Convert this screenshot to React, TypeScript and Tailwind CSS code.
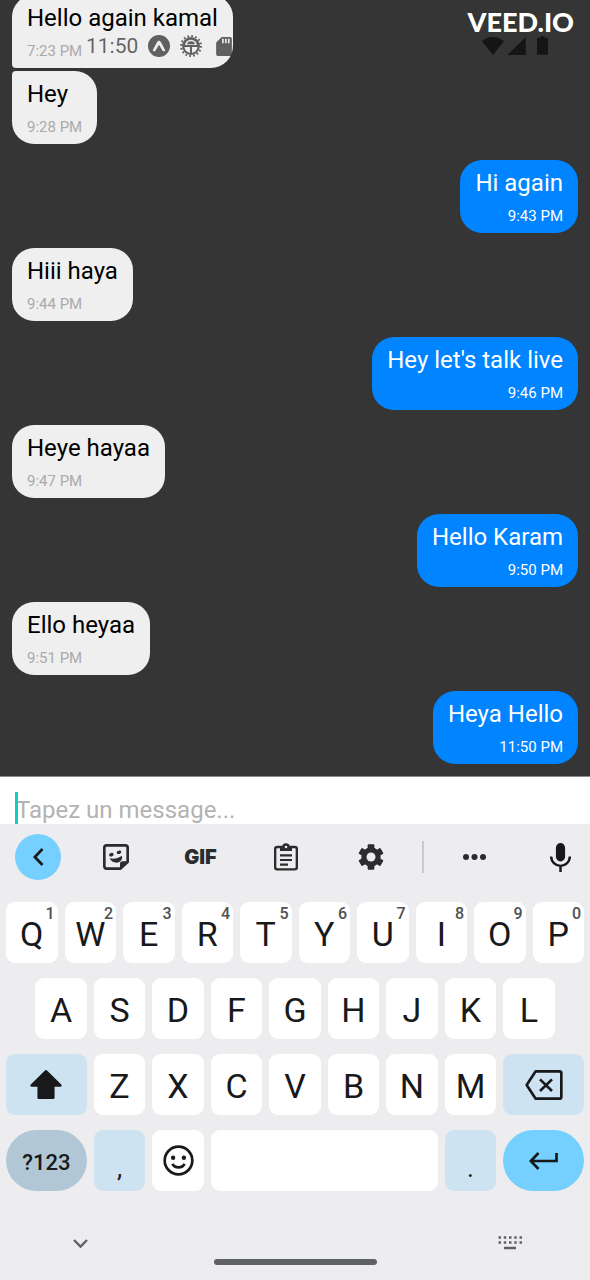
import type { ReactNode } from "react";

type Message = { text: string; time: string; sent?: boolean; joined?: "up" | "down" };

const messages: Message[] = [
  { text: "Hello again kamal", time: "7:23 PM", joined: "down" },
  { text: "Hey", time: "9:28 PM", joined: "up" },
  { text: "Hi again", time: "9:43 PM", sent: true },
  { text: "Hiii haya", time: "9:44 PM" },
  { text: "Hey let's talk live", time: "9:46 PM", sent: true },
  { text: "Heye hayaa", time: "9:47 PM" },
  { text: "Hello Karam", time: "9:50 PM", sent: true },
  { text: "Ello heyaa", time: "9:51 PM" },
  { text: "Heya Hello", time: "11:50 PM", sent: true },
];

function Bubble({ text, time, sent, joined }: Message) {
  const side = sent
    ? "mt-4 self-end bg-[#0084ff] text-white"
    : `self-start bg-[#efefef] text-black ${joined === "up" ? "mt-[3px] rounded-tl-[4px]" : "mt-[15px]"} ${
        joined === "down" ? "rounded-bl-[4px]" : ""
      }`;
  return (
    <li className={`flex shrink-0 flex-col gap-[9px] rounded-[22px] px-[15px] py-2 ${side}`}>
      <p className="text-[24px] leading-[30px]">{text}</p>
      <time
        className={`text-[15px] leading-[18px] ${sent ? "text-right text-white" : "text-left text-[#aaaaaa]"}`}
      >
        {time}
      </time>
    </li>
  );
}

function StatusBar() {
  return (
    <div className="absolute inset-x-0 top-0 flex h-[68px] items-start justify-between pr-4 pl-[86px]">
      <div className="flex items-center gap-[10px] pt-[33px] text-black/60">
        <span className="text-[21px] leading-[26px]">11:50</span>
        <svg viewBox="0 0 66 66" className="size-[22px]" fill="currentColor" aria-hidden="true">
          <path
            fillRule="evenodd"
            d="M33 0a33 33 0 1 0 0 66a33 33 0 1 0 0-66zM33 17c-3 0-4 2-6 5L15 44c-1 3 1 5 3 5 3 0 4-2 6-5l9-15 9 15c2 3 3 5 6 5 2 0 4-2 3-5L39 22c-2-3-3-5-6-5z"
          />
        </svg>
        <svg viewBox="0 0 64 64" className="size-[22px]" fill="currentColor" aria-hidden="true">
          <path
            fillRule="evenodd"
            d="M32 6a26 26 0 1 0 0 52a26 26 0 1 0 0-52zM15 29a17 15 0 0 1 34 0zM13 35h16v17a20 20 0 0 1-16-17zM35 35h16a20 20 0 0 1-16 17z"
          />
          <path d="M21 27a11 9 0 0 1 22 0z" />
          <circle cx="32" cy="32" r="29" fill="none" stroke="currentColor" strokeWidth="6" strokeDasharray="5 6.386" />
        </svg>
        <svg viewBox="0 0 48 58" className="ml-1 h-[19px] w-[16px]" fill="currentColor" aria-hidden="true">
          <path
            fillRule="evenodd"
            d="M17 0h26a5 5 0 0 1 5 5v48a5 5 0 0 1-5 5H5a5 5 0 0 1-5-5V17zM18 5v14h5V5zM27 5v14h5V5zM36 5v14h5V5z"
          />
        </svg>
      </div>
      <div className="flex flex-col items-end pt-2">
        <span className="font-['Lato',sans-serif] text-[27px] leading-[28px] font-black text-white">VEED.IO</span>
        <div className="flex items-center gap-[3px] pr-[26px] text-black/60">
          <svg viewBox="0 0 66 54" className="h-[18px] w-[22px]" fill="currentColor" aria-hidden="true">
            <path d="M33 54L0 13C18-4 48-4 66 13z" />
          </svg>
          <svg viewBox="0 0 56 54" className="h-[18px] w-[19px]" fill="currentColor" aria-hidden="true">
            <path d="M56 0v54H0z" />
          </svg>
          <svg viewBox="0 0 33 56" className="ml-2 h-[19px] w-[11px]" fill="currentColor" aria-hidden="true">
            <path d="M10 0h13v5h7a3 3 0 0 1 3 3v45a3 3 0 0 1-3 3H3a3 3 0 0 1-3-3V8a3 3 0 0 1 3-3h7z" />
          </svg>
        </div>
      </div>
    </div>
  );
}

function Toolbar() {
  const tool = "flex size-[46px] items-center justify-center rounded-full";
  return (
    <div className="grid h-[66px] grid-cols-[73fr_85fr_85fr_85fr_85fr_19fr_85fr_73fr] items-center justify-items-center text-[#2b2c2d]">
      <button type="button" aria-label="Back" className={`${tool} ml-[15px] justify-self-start bg-[#75cfff] text-[#17191a]`}>
        <svg viewBox="0 0 32 54" className="h-[18px] w-[11px]" fill="none" stroke="currentColor" strokeWidth="8" aria-hidden="true">
          <path d="M28 3L5 27l23 24" />
        </svg>
      </button>
      <button type="button" aria-label="Stickers" className={tool}>
        <svg viewBox="0 0 78 78" className="size-[26px]" aria-hidden="true">
          <path
            d="M52 74H11a7 7 0 0 1-7-7V11a7 7 0 0 1 7-7h56a7 7 0 0 1 7 7v43z"
            fill="none"
            stroke="currentColor"
            strokeWidth="8"
          />
          <path d="M51 77V60a8 8 0 0 1 8-8h18z" fill="currentColor" />
          <ellipse cx="25" cy="32" rx="7" ry="5.500" transform="rotate(-15 25 32)" fill="currentColor" />
          <ellipse cx="48" cy="25" rx="7" ry="5" transform="rotate(-15 48 25)" fill="currentColor" />
          <path d="M20 43c13 3 25 0 37-8 2 12-6 21-17 21-9 0-16-5-20-13z" fill="currentColor" />
        </svg>
      </button>
      <button type="button" className={`${tool} font-['Inter',sans-serif] text-[20px] font-black`}>
        GIF
      </button>
      <button type="button" aria-label="Clipboard" className={tool}>
        <svg viewBox="0 0 72 84" className="h-[28px] w-[24px]" fill="none" stroke="currentColor" strokeWidth="7" aria-hidden="true">
          <rect x="3.500" y="12" width="65" height="67" rx="6" />
          <path d="M18 12h10a8 8 0 0 1 16 0h10v12H18z" fill="currentColor" stroke="none" />
          <path d="M28 12a8 8 0 0 1 16 0" fill="currentColor" />
          <circle cx="36" cy="12" r="4" fill="#ededef" stroke="none" />
          <path d="M18 37h36M18 51h36M18 65h24" strokeWidth="6.5" />
        </svg>
      </button>
      <button type="button" aria-label="Settings" className={tool}>
        <svg viewBox="0 0 78 78" className="size-[26px]" aria-hidden="true">
          <g fill="currentColor">
            <circle cx="39" cy="39" r="29" />
            <rect x="29" y="1" width="20" height="76" rx="3" />
            <rect x="29" y="1" width="20" height="76" rx="3" transform="rotate(60 39 39)" />
            <rect x="29" y="1" width="20" height="76" rx="3" transform="rotate(120 39 39)" />
          </g>
          <circle cx="39" cy="39" r="13.500" fill="#ededef" />
        </svg>
      </button>
      <span className="h-8 w-[2px] bg-[#c9cacc]" />
      <button type="button" aria-label="More" className={tool}>
        <svg viewBox="0 0 69 18" className="h-[6px] w-[23px]" fill="currentColor" aria-hidden="true">
          <circle cx="9" cy="9" r="9" />
          <circle cx="34.5" cy="9" r="9" />
          <circle cx="60" cy="9" r="9" />
        </svg>
      </button>
      <button type="button" aria-label="Voice input" className={`${tool} mr-[7px] justify-self-end text-[#17191a]`}>
        <svg viewBox="0 0 64 88" className="h-[29px] w-[21px]" aria-hidden="true">
          <rect x="18" y="0" width="28" height="56" rx="14" fill="currentColor" />
          <path d="M3.500 41a28.500 28.500 0 0 0 57 0M32 68v20" fill="none" stroke="currentColor" strokeWidth="7.5" />
        </svg>
      </button>
    </div>
  );
}

type KeyProps = { children?: ReactNode; label?: string; className?: string };

function Key({ children, label, className = "col-span-2 rounded-[9px] bg-white" }: KeyProps) {
  return (
    <button type="button" aria-label={label} className={`relative flex items-center justify-center ${className}`}>
      {children}
    </button>
  );
}

function Letter({ char, hint, first }: { char: string; hint?: string; first?: boolean }) {
  return (
    <Key className={`col-span-2 rounded-[9px] bg-white pt-1 text-[34px] ${first ? "col-start-2" : ""}`}>
      {char}
      {hint && (
        <span className="absolute top-1 right-[3px] text-[16px] leading-4 font-medium text-[#4f5051]">{hint}</span>
      )}
    </Key>
  );
}

function Keyboard() {
  return (
    <section aria-label="Keyboard" className="shrink-0 bg-[#ededef] text-[#17191a]">
      <Toolbar />
      <div className="grid auto-rows-[61px] grid-cols-20 gap-x-[7px] gap-y-[15px] px-[6px] pt-3">
        {"QWERTYUIOP".split("").map((c, i) => (
          <Letter key={c} char={c} hint={String((i + 1) % 10)} />
        ))}
        {"ASDFGHJKL".split("").map((c, i) => (
          <Letter key={c} char={c} first={i === 0} />
        ))}
        <Key label="Shift" className="col-span-3 col-start-1 rounded-[9px] bg-[#cee3f2]">
          <svg viewBox="0 0 96 88" className="h-[29px] w-[32px]" fill="currentColor" aria-hidden="true">
            <path d="M44 2q4-4 8 0l43 43q2 6-4 6H74v33a4 4 0 0 1-4 4H26a4 4 0 0 1-4-4V51H5q-6 0-4-6z" />
          </svg>
        </Key>
        {"ZXCVBNM".split("").map((c) => (
          <Letter key={c} char={c} />
        ))}
        <Key label="Delete" className="col-span-3 rounded-[9px] bg-[#cee3f2]">
          <svg viewBox="0 0 112 90" className="h-[30px] w-[38px]" fill="none" stroke="currentColor" strokeWidth="8" strokeLinejoin="round" aria-hidden="true">
            <path d="M31 4h71a6 6 0 0 1 6 6v70a6 6 0 0 1-6 6H31L4 45z" />
            <path d="M44 28l36 35M80 28L44 63" />
          </svg>
        </Key>
        <Key className="col-span-3 rounded-full bg-[#b1c7d5] pt-1 text-[22px] font-medium">?123</Key>
        <Key className="col-span-2 rounded-[9px] bg-[#cee3f2] pt-4 text-[26px]">,</Key>
        <Key label="Emoji">
          <svg viewBox="0 0 92 92" className="size-[31px]" fill="none" stroke="currentColor" strokeWidth="8" aria-hidden="true">
            <circle cx="46" cy="46" r="41" />
            <circle cx="30" cy="38" r="6.500" fill="currentColor" stroke="none" />
            <circle cx="62" cy="38" r="6.500" fill="currentColor" stroke="none" />
            <path d="M28 56c7 14 29 14 36 0" />
          </svg>
        </Key>
        <Key label="Space" className="col-span-8 rounded-[9px] bg-white" />
        <Key className="col-span-2 rounded-[9px] bg-[#cee3f2] pt-4 text-[26px]">.</Key>
        <Key label="Send" className="col-span-3 rounded-full bg-[#75cfff]">
          <svg viewBox="0 0 86 54" className="h-[18px] w-[29px]" fill="none" stroke="currentColor" strokeWidth="8" aria-hidden="true">
            <path d="M82 3v24H6M28 3L5 27l23 24" />
          </svg>
        </Key>
      </div>
      <div className="grid h-[89px] grid-cols-[160fr_270fr_160fr] justify-items-center text-[#5f6263]">
        <button type="button" aria-label="Hide keyboard" className="mt-8 flex h-10 w-12 items-center justify-center">
          <svg viewBox="0 0 45 27" className="h-[9px] w-[15px]" fill="none" stroke="currentColor" strokeWidth="7" aria-hidden="true">
            <path d="M3 3l19.500 20L42 3" />
          </svg>
        </button>
        <span className="mb-[15px] h-[6px] w-[163px] self-end rounded-full bg-[#5f6263]" />
        <button type="button" aria-label="Change keyboard" className="mt-8 flex h-10 w-12 items-center justify-center">
          <svg viewBox="0 0 24 14" className="h-[14px] w-[24px]" stroke="currentColor" strokeWidth="2.500" aria-hidden="true">
            <path d="M0.500 1.500h24M0.500 6.500h24" strokeDasharray="2.500 2.750" />
            <path d="M6 12h12" />
          </svg>
        </button>
      </div>
    </section>
  );
}

export default function App() {
  return (
    <main className="relative flex h-screen flex-col overflow-hidden bg-[#353535] font-['Roboto',sans-serif]">
      <ul className="flex min-h-0 flex-1 flex-col justify-end overflow-hidden px-3 pb-3">
        {messages.map((m) => (
          <Bubble key={m.text} {...m} />
        ))}
      </ul>
      <StatusBar />
      <div className="relative h-12 shrink-0 overflow-hidden border-t border-[#8a8a8a] bg-white pt-[15px]">
        <input
          type="text"
          aria-label="Message"
          placeholder="Tapez un message..."
          className="block h-9 w-full bg-transparent px-4 text-[24px] text-black outline-none placeholder:text-[#b3b3b3]"
        />
        <span className="absolute top-[15px] bottom-0 left-[15px] w-[3px] bg-[#0fcfc4]" />
      </div>
      <Keyboard />
    </main>
  );
}
